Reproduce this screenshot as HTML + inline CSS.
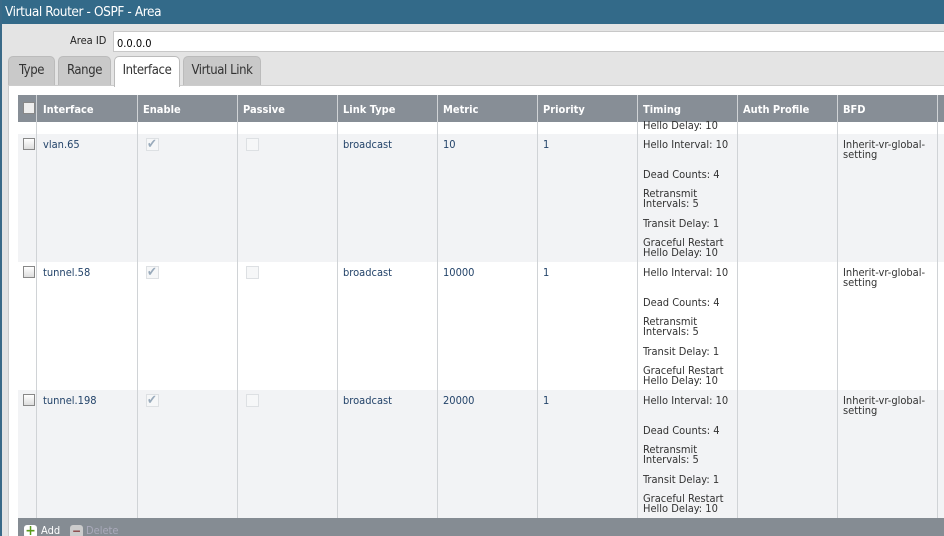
<!DOCTYPE html><html><head><style>
*{margin:0;padding:0;box-sizing:border-box}
body{width:944px;height:536px;overflow:hidden;background:#e4e4e4;font-family:"DejaVu Sans Condensed","DejaVu Sans","Liberation Sans",sans-serif;position:relative}
.lb{position:absolute;left:0;top:0;width:2px;height:536px;background:#3a6a88}
.title{position:absolute;left:0;top:0;width:944px;height:24px;background:#336a89;color:#fff;font-size:13.5px;line-height:24px;padding-left:5px;letter-spacing:-0.4px}
.lbl{position:absolute;left:70px;top:34px;font-size:11px;color:#222}
.inp{position:absolute;left:113px;top:31px;width:831px;height:21px;background:#fff;border:1px solid #c8c8c8;border-right:none;font-size:11px;padding:5px 3px}
.tab{position:absolute;top:56px;height:30px;background:#c9c9c9;border:1px solid #bbb;border-bottom:none;border-radius:5px 5px 0 0;font-size:13px;color:#333;text-align:center;line-height:28px;letter-spacing:-0.4px}
.panel{position:absolute;left:8px;top:85px;width:936px;height:451px;background:#fff;border-left:1px solid #ccc;border-top:1px solid #ccc}
.tbl{position:absolute;left:18px;top:95px;width:926px;height:441px;background:#fff;overflow:hidden}
.hd{position:absolute;left:0;top:0;width:926px;height:27px;background:#878e96}
.hd span{position:absolute;top:8px;font-size:11px;color:#fff;font-weight:bold}
.row{position:absolute;left:0;width:926px;height:128px}
.vl{position:absolute;top:0;width:1px;height:423px;background:#d0d3d6}
.t{position:absolute;font-size:11px;color:#333;line-height:10px}
.b{color:#24446a}
.cb{position:absolute;width:12px;height:12px;border:1px solid #888;background:linear-gradient(#fff,#ddd)}
.cbd{position:absolute;width:13px;height:13px;border:1px solid #dde0e3;background:#f6f7f8}
.foot{position:absolute;left:0;top:423px;width:926px;height:20px;background:#858c93}
</style></head><body>
<div class="title">Virtual Router - OSPF - Area</div>
<div class="lb"></div>
<div class="lbl">Area ID</div>
<div class="inp">0.0.0.0</div>
<div class="tab" style="left:8px;width:47px">Type</div>
<div class="tab" style="left:58px;width:53px">Range</div>
<div class="tab" style="left:114px;width:66px;background:#fff;height:31px;z-index:2">Interface</div>
<div class="tab" style="left:183px;width:78px">Virtual Link</div>
<div class="panel"></div>
<div class="tbl">
<div class="row" style="top:27px;height:12px;background:#fff"></div>
<div class="row" style="top:39px;background:#f2f3f5"></div>
<div class="row" style="top:167px;background:#fff"></div>
<div class="row" style="top:295px;background:#f2f3f5"></div>
<div class="hd">
<div class="cb" style="left:5px;top:7px;background:#eee"></div>
<span style="left:25px">Interface</span><span style="left:125px">Enable</span><span style="left:225px">Passive</span><span style="left:325px">Link Type</span><span style="left:425px">Metric</span><span style="left:525px">Priority</span><span style="left:625px">Timing</span><span style="left:725px">Auth Profile</span><span style="left:825px">BFD</span>
</div>
<div class="vl" style="left:18px"></div><div class="vl" style="left:119px"></div><div class="vl" style="left:219px"></div><div class="vl" style="left:319px"></div><div class="vl" style="left:419px"></div><div class="vl" style="left:519px"></div><div class="vl" style="left:619px"></div><div class="vl" style="left:719px"></div><div class="vl" style="left:819px"></div><div class="vl" style="left:919px"></div>
<div class="t" style="left:625px;top:26px">Hello Delay: 10</div>
<div style="position:absolute;left:0;top:39px;width:926px">
<div class="cb" style="left:5px;top:4px"></div><div class="t b" style="left:25px;top:6px">vlan.65</div>
<div class="cbd" style="left:128px;top:4px;color:#9ab;font-size:13px;line-height:11px">✔</div><div class="cbd" style="left:228px;top:4px"></div>
<div class="t b" style="left:325px;top:6px">broadcast</div><div class="t b" style="left:425px;top:6px">10</div><div class="t b" style="left:525px;top:6px">1</div>
<div class="t" style="left:625px;top:6px">Hello Interval: 10</div><div class="t" style="left:625px;top:36px">Dead Counts: 4</div><div class="t" style="left:625px;top:55px">Retransmit<br>Intervals: 5</div><div class="t" style="left:625px;top:85px">Transit Delay: 1</div><div class="t" style="left:625px;top:104px">Graceful Restart<br>Hello Delay: 10</div>
<div class="t" style="left:825px;top:6px">Inherit-vr-global-<br>setting</div>
</div>
<div style="position:absolute;left:0;top:167px;width:926px">
<div class="cb" style="left:5px;top:4px"></div><div class="t b" style="left:25px;top:6px">tunnel.58</div>
<div class="cbd" style="left:128px;top:4px;color:#9ab;font-size:13px;line-height:11px">✔</div><div class="cbd" style="left:228px;top:4px"></div>
<div class="t b" style="left:325px;top:6px">broadcast</div><div class="t b" style="left:425px;top:6px">10000</div><div class="t b" style="left:525px;top:6px">1</div>
<div class="t" style="left:625px;top:6px">Hello Interval: 10</div><div class="t" style="left:625px;top:36px">Dead Counts: 4</div><div class="t" style="left:625px;top:55px">Retransmit<br>Intervals: 5</div><div class="t" style="left:625px;top:85px">Transit Delay: 1</div><div class="t" style="left:625px;top:104px">Graceful Restart<br>Hello Delay: 10</div>
<div class="t" style="left:825px;top:6px">Inherit-vr-global-<br>setting</div>
</div>
<div style="position:absolute;left:0;top:295px;width:926px">
<div class="cb" style="left:5px;top:4px"></div><div class="t b" style="left:25px;top:6px">tunnel.198</div>
<div class="cbd" style="left:128px;top:4px;color:#9ab;font-size:13px;line-height:11px">✔</div><div class="cbd" style="left:228px;top:4px"></div>
<div class="t b" style="left:325px;top:6px">broadcast</div><div class="t b" style="left:425px;top:6px">20000</div><div class="t b" style="left:525px;top:6px">1</div>
<div class="t" style="left:625px;top:6px">Hello Interval: 10</div><div class="t" style="left:625px;top:36px">Dead Counts: 4</div><div class="t" style="left:625px;top:55px">Retransmit<br>Intervals: 5</div><div class="t" style="left:625px;top:85px">Transit Delay: 1</div><div class="t" style="left:625px;top:104px">Graceful Restart<br>Hello Delay: 10</div>
<div class="t" style="left:825px;top:6px">Inherit-vr-global-<br>setting</div>
</div>
<div class="foot">
<div style="position:absolute;left:6px;top:7px;width:13px;height:13px;background:#fff;border-radius:3px;color:#5a9a1a;font-weight:bold;font-size:14px;line-height:13px;text-align:center">+</div>
<div class="t" style="left:23px;top:8px;color:#fff">Add</div>
<div style="position:absolute;left:52px;top:7px;width:13px;height:13px;background:#ccc;border-radius:3px;color:#844;font-weight:bold;font-size:12px;line-height:12px;text-align:center">−</div>
<div class="t" style="left:68px;top:8px;color:#aab">Delete</div>
</div>
</div>
</body></html>
